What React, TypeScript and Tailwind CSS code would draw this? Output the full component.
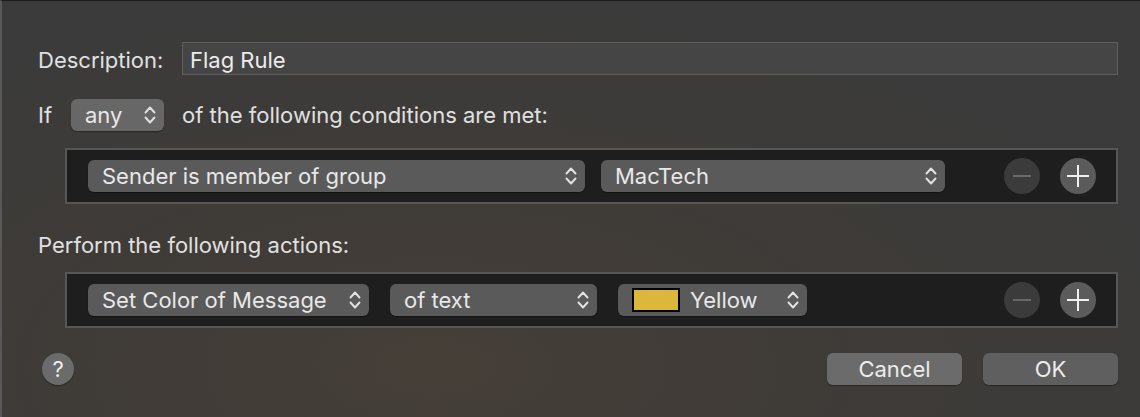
import React from 'react';

function Chevrons() {
  return (
    <svg width="14" height="22" viewBox="0 0 14 22" fill="none" className="shrink-0">
      <path d="M2.5 8.5 L7 3.5 L11.5 8.5" stroke="#e2e2e2" strokeWidth="1.9" strokeLinecap="round" strokeLinejoin="round" />
      <path d="M2.5 13.5 L7 18.5 L11.5 13.5" stroke="#e2e2e2" strokeWidth="1.9" strokeLinecap="round" strokeLinejoin="round" />
    </svg>
  );
}

function Popup({ label, width, children, light }: { label: string; width: string; children?: React.ReactNode; light?: boolean }) {
  return (
    <div
      className={`${width} h-[32px] shrink-0 rounded-[6px] ${light ? 'bg-[#676767]' : 'bg-[#5a5a5a]'} shadow-[0_1px_1px_rgba(0,0,0,0.35)] flex items-center pl-[14px] pr-[7px]`}
    >
      {children}
      <span className="flex-1 text-[22px] text-[#e8e8e8] leading-[26px] whitespace-nowrap">{label}</span>
      <Chevrons />
    </div>
  );
}

function RoundButtons() {
  return (
    <div className="flex items-center gap-[20px] ml-auto">
      <div className="w-[36px] h-[36px] rounded-full bg-[#3b3b3b] flex items-center justify-center">
        <div className="w-[18px] h-[2px] bg-[#686868]" />
      </div>
      <div className="w-[36px] h-[36px] rounded-full bg-[#5b5b5b] flex items-center justify-center relative">
        <div className="w-[22px] h-[2px] bg-[#f0f0f0]" />
        <div className="absolute w-[2px] h-[22px] bg-[#f0f0f0]" />
      </div>
    </div>
  );
}

export default function App() {
  return (
    <div
      className="w-[1140px] h-[417px] overflow-hidden border-l-2 border-l-[#585858] border-t border-t-[#1c1c1c] bg-[radial-gradient(ellipse_70%_90%_at_38%_88%,#463f38_0%,#3f3b37_45%,#3b3b3b_100%)] text-[#e0e0e0]"
      style={{ fontFamily: 'Inter, "Liberation Sans", sans-serif' }}
    >
      <div className="pl-[36px] pr-[22px] pt-[41px] flex flex-col">
        {/* Description */}
        <div className="flex items-center h-[33px]">
          <span className="w-[144px] text-[22px] leading-[26px] pt-[3px]">Description:</span>
          <div className="flex-1 h-[33px] border border-[#5e5e5e] bg-[#454545] flex items-center pl-[7px]">
            <span className="text-[22px] leading-[26px] pt-[3px] text-[#ececec]">Flag Rule</span>
          </div>
        </div>

        {/* If any */}
        <div className="flex items-center h-[32px] mt-[24px]">
          <span className="w-[33px] text-[22px] leading-[26px]">If</span>
          <Popup label="any" width="w-[93px]" light />
          <span className="ml-[18px] text-[22px] leading-[26px]">of the following conditions are met:</span>
        </div>

        {/* Conditions */}
        <div className="ml-[27px] mt-[17px] h-[56px] border-2 border-[#565656] bg-[#1e1e1e] flex items-center pl-[21px] pr-[20px]">
          <Popup label="Sender is member of group" width="w-[497px]" />
          <div className="w-[16px]" />
          <Popup label="MacTech" width="w-[344px]" />
          <RoundButtons />
        </div>

        {/* Actions label */}
        <div className="mt-[27px] h-[28px] flex items-center">
          <span className="text-[22px] leading-[26px]">Perform the following actions:</span>
        </div>

        {/* Actions */}
        <div className="ml-[27px] mt-[13px] h-[56px] border-2 border-[#565656] bg-[#1e1e1e] flex items-center pl-[21px] pr-[20px]">
          <Popup label="Set Color of Message" width="w-[281px]" />
          <div className="w-[21px]" />
          <Popup label="of text" width="w-[207px]" />
          <div className="w-[21px]" />
          <Popup label="Yellow" width="w-[189px]">
            <div className="w-[48px] h-[24px] border-2 border-black bg-[#dbb83c] mr-[10px] shrink-0" />
          </Popup>
          <RoundButtons />
        </div>

        {/* Footer */}
        <div className="mt-[25px] flex items-center h-[32px]">
          <div className="ml-[4px] w-[32px] h-[32px] rounded-full bg-[#6b6b6b] shadow-[0_1px_1px_rgba(0,0,0,0.35)] flex items-center justify-center">
            <span className="text-[22px] leading-none text-[#efefef]">?</span>
          </div>
          <div className="ml-auto flex items-center gap-[21px]">
            <div className="w-[135px] h-[32px] rounded-[6px] bg-[#6b6b6b] shadow-[0_1px_1px_rgba(0,0,0,0.35)] flex items-center justify-center">
              <span className="text-[22px] leading-[26px] text-[#ececec]">Cancel</span>
            </div>
            <div className="w-[135px] h-[32px] rounded-[6px] bg-[#5f5f5f] shadow-[0_1px_1px_rgba(0,0,0,0.35)] flex items-center justify-center">
              <span className="text-[22px] leading-[26px] text-[#ececec]">OK</span>
            </div>
          </div>
        </div>
      </div>
    </div>
  );
}
